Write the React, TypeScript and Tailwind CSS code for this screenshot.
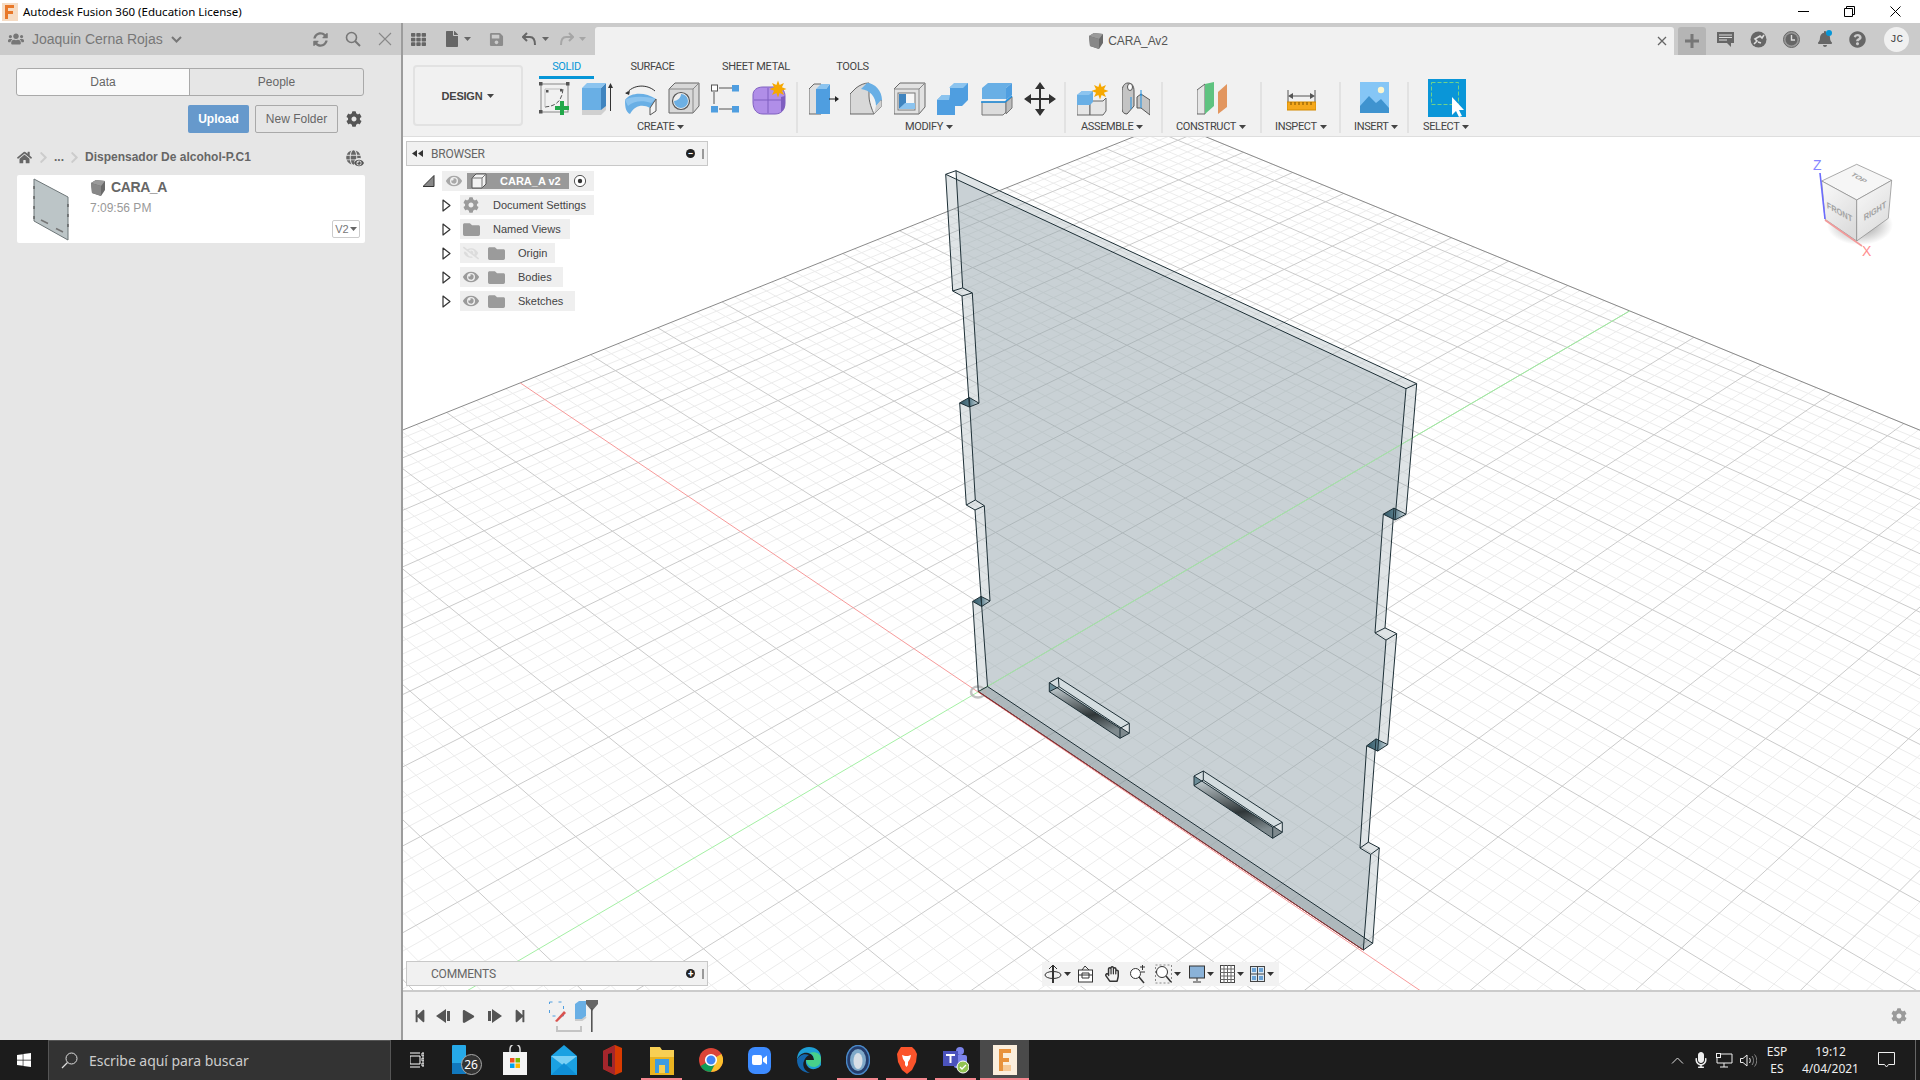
import {
  FaCog, FaHome, FaUsers, FaSyncAlt, FaGlobe, FaQuestionCircle, FaBell, FaFile, FaSave, FaEye, FaEyeSlash,
  FaFolder, FaMicrophone, FaPlay, FaTh, FaWindows, FaRegHandPaper, FaChevronRight, FaStepBackward, FaStepForward,
} from 'react-icons/fa';

// ground grid: homography fitted on the axes of the reference
const project = (u: number, v: number) => {
  const t = u * 0.02679;
  const s = v * 0.02814;
  const d = 1 + t + s;
  return [(978 - 1476 * t + 3661 * s) / d, (692 - 965 * t - 877 * s) / d];
};

const U_MAX = 8.56;
const V_MAX = 11.4;
const U_MIN = -14;
const V_MIN = -13;

function gridLines(major: boolean) {
  const lines: string[] = [];
  for (let i = -70; i <= 42; i++) {
    if ((i % 5 === 0) !== major || i === 0) continue;
    const a = project(i / 5, V_MIN);
    const b = project(i / 5, V_MAX);
    lines.push(`M${a[0]} ${a[1]}L${b[0]} ${b[1]}`);
  }
  for (let i = -65; i <= 57; i++) {
    if ((i % 5 === 0) !== major || i === 0) continue;
    const a = project(U_MIN, i / 5);
    const b = project(U_MAX, i / 5);
    lines.push(`M${a[0]} ${a[1]}L${b[0]} ${b[1]}`);
  }
  return lines.join('');
}

type Pt = [number, number];
const pts = (list: Pt[]) => list.map((p) => p.join(',')).join(' ');
const sub = (list: Pt[]) => 'M' + list.map((p) => p.join(' ')).join('L') + 'Z';

const FRONT: Pt[] = [
  [945.7, 174.3], [952.7, 291], [962, 296], [969.3, 407], [959.7, 402.9], [966.3, 505], [975, 510], [981.7, 606.5],
  [972.7, 601.4], [978.3, 691.5], [1363.3, 950], [1370.7, 854.4], [1360, 848], [1366.7, 745.8], [1377.7, 751.1],
  [1386, 640.1], [1375, 632.9], [1383.3, 514.2], [1395, 520], [1406, 388.7],
];
const BACK: Pt[] = [
  [956, 170.7], [962.7, 287.9], [972.3, 292.9], [979, 403.2], [969.3, 397.5], [975.3, 500], [984.3, 505.7], [990, 601],
  [981, 596.4], [987.5, 686.5], [1372.7, 943.3], [1379.3, 848], [1368.3, 842.2], [1376, 738.9], [1387.7, 744.6],
  [1396.7, 633.6], [1385, 627.9], [1394, 508.1], [1406, 514.2], [1416.7, 383.7],
];
const SLOTS: { f: Pt[]; b: Pt[] }[] = [
  {
    f: [[1049.3, 682.7], [1120, 728.3], [1120, 738.3], [1049.3, 691.7]],
    b: [[1058.3, 677.7], [1129.3, 723.3], [1129.3, 733.3], [1059, 686.7]],
  },
  {
    f: [[1194, 776], [1272.7, 827.3], [1272.7, 838.3], [1194, 785.7]],
    b: [[1203.3, 771], [1282.3, 822.3], [1282.3, 832.3], [1203.3, 780]],
  },
];
const DARK_STEPS = [3, 7, 17, 13];

function Scene() {
  const holes = SLOTS.map((s) => sub(s.f)).join('');
  const holesB = SLOTS.map((s) => sub(s.b)).join('');
  return (
    <svg className="absolute inset-0 w-full h-full" viewBox="403 137 1517 853">
      <defs>
        <linearGradient id="wall" x1="0" y1="0" x2="0.3" y2="1">
          <stop offset="0" stopColor="#c8d2d6" />
          <stop offset="0.65" stopColor="#2f3638" />
          <stop offset="1" stopColor="#7f8a8e" />
        </linearGradient>
        <linearGradient id="step" x1="0" y1="0" x2="1" y2="0">
          <stop offset="0" stopColor="#2f5563" />
          <stop offset="0.5" stopColor="#5b7f8d" />
          <stop offset="1" stopColor="#d0dade" />
        </linearGradient>
      </defs>
      <path d={gridLines(false)} stroke="#ececec" strokeWidth="1" fill="none" />
      <path d={gridLines(true)} stroke="#cbcbcb" strokeWidth="1" fill="none" />
      <path d={`M${project(U_MAX, V_MIN).join(' ')}L${project(U_MAX, V_MAX).join(' ')}L${project(U_MIN, V_MAX).join(' ')}`} stroke="#8a8a8a" strokeWidth="1" fill="none" />
      <path d={`M${project(U_MAX, 0).join(' ')}L${project(U_MIN, 0).join(' ')}`} stroke="#f79a9a" strokeWidth="1" fill="none" />
      <path d={`M${project(0, V_MAX).join(' ')}L${project(0, V_MIN).join(' ')}`} stroke="#a4f0a4" strokeWidth="1" fill="none" />

      {/* plate */}
      <path d={sub(BACK) + holesB} fill="#98a9ae" fillOpacity="0.31" fillRule="evenodd" />
      <path d={sub(FRONT) + holes} fill="#98a9ae" fillOpacity="0.31" fillRule="evenodd" />
      <polygon points={pts([FRONT[9], FRONT[10], BACK[10], BACK[9]])} fill="#6c7c84" fillOpacity="0.42" />
      {DARK_STEPS.map((i) => (
        <polygon key={i} points={pts([FRONT[i], FRONT[i + 1], BACK[i + 1], BACK[i]])} fill="url(#step)" />
      ))}
      {SLOTS.map((s, i) => (
        <g key={i}>
          <polygon points={pts([s.f[3], s.f[2], s.b[2], s.b[3]])} fill="url(#wall)" />
          <polygon points={pts([s.f[0], s.b[0], s.b[3], s.f[3]])} fill="#4d7583" fillOpacity="0.8" />
          <polygon points={pts([s.f[0], s.f[1], s.b[1], s.b[0]])} fill="#d4dde0" />
        </g>
      ))}
      <path d={`M${project(0, 11.4).join(' ')}L978 692`} stroke="#a6e2a6" strokeWidth="1" fill="none" />
      <ellipse cx="978" cy="692" rx="7" ry="5.5" fill="none" stroke="#b4b4b4" strokeWidth="2.5" opacity="0.8" />

      <g stroke="#1d2f36" strokeWidth="1" fill="none" strokeLinejoin="round">
        <polygon points={pts(FRONT)} />
        <polygon points={pts(BACK)} />
        {FRONT.map((p, i) => (
          <line key={i} x1={p[0]} y1={p[1]} x2={BACK[i][0]} y2={BACK[i][1]} />
        ))}
        {SLOTS.map((s, i) => (
          <g key={i}>
            <polygon points={pts(s.f)} />
            <polygon points={pts(s.b)} />
            {s.f.map((p, j) => (
              <line key={j} x1={p[0]} y1={p[1]} x2={s.b[j][0]} y2={s.b[j][1]} />
            ))}
          </g>
        ))}
      </g>
      <path d={`M978.3 691.5L1363.3 950`} stroke="#9c2b2b" strokeWidth="1" fill="none" />
    </svg>
  );
}

function ViewCube() {
  return (
    <svg className="absolute left-[1404px] top-[20px]" width="90" height="108" viewBox="1807 157 90 108">
      <defs>
        <linearGradient id="cubeF" x1="0" y1="0" x2="0.6" y2="1">
          <stop offset="0" stopColor="#fafafa" />
          <stop offset="1" stopColor="#dcdcdc" />
        </linearGradient>
        <radialGradient id="cubeS">
          <stop offset="0.4" stopColor="#888" stopOpacity="0.55" />
          <stop offset="1" stopColor="#888" stopOpacity="0" />
        </radialGradient>
      </defs>
      <ellipse cx="1860" cy="225" rx="33" ry="20" fill="url(#cubeS)" />
      <polygon points="1856.7,164.3 1891.7,180.3 1856.7,200 1821.7,181" fill="#f6f6f6" stroke="#888" strokeWidth="0.7" />
      <polygon points="1821.7,181 1856.7,200 1856.7,241 1825,219.3" fill="url(#cubeF)" stroke="#888" strokeWidth="0.7" />
      <polygon points="1856.7,200 1891.7,180.3 1888.3,218.3 1856.7,241" fill="url(#cubeF)" stroke="#888" strokeWidth="0.7" />
      <g fill="#a2a2a2" fontFamily="Liberation Sans" fontWeight="bold">
        <text transform="matrix(0.72 0.42 -0.62 0.38 1850 175)" fontSize="9.5">TOP</text>
        <text transform="matrix(0.82 0.46 0.06 1 1827 208)" fontSize="9">FRONT</text>
        <text transform="matrix(0.8 -0.5 0.06 1 1864 221)" fontSize="9">RIGHT</text>
      </g>
      <line x1="1820" y1="173" x2="1825" y2="219" stroke="#6b6bff" strokeWidth="1.6" />
      <line x1="1825" y1="220" x2="1862" y2="246" stroke="#f39a9a" strokeWidth="1.6" />
      <text x="1813" y="170" fontSize="14" fill="#8686ff" fontFamily="Liberation Sans">Z</text>
      <text x="1862" y="256" fontSize="14" fill="#ff9090" fontFamily="Liberation Sans">X</text>
    </svg>
  );
}

function Caret({ className = 'text-[#444]' }: { className?: string }) {
  return (
    <svg className={className} width="7" height="4" viewBox="0 0 7 4">
      <path d="M0 0h7L3.5 4z" fill="currentColor" />
    </svg>
  );
}

/* toolbar drawings */
const IconSketch = () => (
  <svg width="32" height="34" viewBox="0 0 32 34">
    <rect x="2" y="2" width="27" height="28" fill="none" stroke="#888" strokeWidth="1" />
    <path d="M6 25C18 24 23 18 24 7" fill="none" stroke="#555" strokeWidth="1" strokeDasharray="4 2" />
    <path d="M6 7h17M6 7v18" stroke="#bbb" strokeWidth="1" />
    <g fill="#555">
      <rect x="0" y="0" width="3.5" height="3.5" />
      <rect x="27" y="0" width="3.5" height="3.5" />
      <rect x="0" y="28" width="3.5" height="3.5" />
      <rect x="7" y="8" width="2.5" height="2.5" />
      <rect x="21" y="7" width="2.5" height="2.5" />
    </g>
    <path d="M21 19h4v5h5v4h-5v5h-4v-5h-5v-4h5z" fill="#22a84a" />
  </svg>
);
const IconExtrude = () => (
  <svg width="32" height="34" viewBox="0 0 32 34">
    <path d="M0 28l5-4h19v4l-5 5H0z" fill="#d0d0d0" />
    <path d="M0 6h19v22H0z" fill="#69afe5" />
    <path d="M19 6l5-5v23l-5 4z" fill="#3f84bf" />
    <path d="M0 6l5-5h19l-5 5z" fill="#8cc4ef" />
    <path d="M28.5 29V3" stroke="#333" strokeWidth="1" />
    <path d="M26 6l2.5-5L31 6z" fill="#333" />
  </svg>
);
const IconRevolve = () => (
  <svg width="32" height="34" viewBox="0 0 32 34">
    <path d="M1 12C8 2 22 2 30 9" fill="none" stroke="#333" strokeWidth="1" />
    <path d="M0 11l5-2-1 4z" fill="#333" />
    <path d="M0 18C6 10 20 10 31 17l-6 9C18 22 10 23 5 32 1 30 0 26 0 18z" fill="#69afe5" />
    <path d="M0 18C6 14 20 14 31 17L26 21C18 18 8 19 3 24z" fill="#8cc4ef" />
    <path d="M25 26l6-9v12l-6 4z" fill="#f4f4f4" stroke="#555" strokeWidth="1" />
  </svg>
);
const IconHole = () => (
  <svg width="32" height="34" viewBox="0 0 32 34">
    <path d="M1 7l6-6h24v23l-6 7H1z" fill="#d8d8d8" stroke="#666" strokeWidth="1" />
    <path d="M1 7h24v24M25 7l6-6" fill="none" stroke="#888" strokeWidth="1" />
    <circle cx="13" cy="19" r="8.5" fill="#eee" stroke="#555" strokeWidth="1.2" />
    <path d="M13 12a7 7 0 1 1-7 7c3 0 7-3 7-7z" fill="#6db0e4" />
  </svg>
);
const IconPattern = () => (
  <svg width="28" height="34" viewBox="0 0 28 34">
    <path d="M8 6h13M3 10v12M8 27h13" stroke="#555" strokeWidth="1" />
    <rect x="0.5" y="3" width="6" height="6" fill="#fff" stroke="#555" />
    <rect x="21" y="3" width="7" height="6.5" fill="#4f9ee0" />
    <rect x="0" y="24" width="7" height="6.5" fill="#4f9ee0" />
    <rect x="21" y="24" width="7" height="6.5" fill="#4f9ee0" />
  </svg>
);
const Star = ({ x, y, r }: { x: number; y: number; r: number }) => {
  const p: string[] = [];
  for (let i = 0; i < 16; i++) {
    const a = (i * Math.PI) / 8;
    const l = i % 2 ? r * 0.5 : r;
    p.push(`${x + l * Math.cos(a)},${y + l * Math.sin(a)}`);
  }
  return <polygon points={p.join(' ')} fill="#f6a800" />;
};
const IconForm = () => (
  <svg className="ml-[3px] overflow-visible" width="33" height="34" viewBox="0 0 33 34">
    <path d="M0 13C0 8 4 5 10 5h12c7 0 10 4 10 9v7c0 7-4 11-10 11H10C4 32 0 28 0 20z" fill="#b08ee8" stroke="#7f5fc0" />
    <path d="M1 18h30M15 6v25" stroke="#7f5fc0" strokeWidth="1" />
    <path d="M28 15l4-1v7c0 4-1 7-4 9z" fill="#7f5fc0" />
    <Star x={25} y={7} r={8.5} />
  </svg>
);
const IconPressPull = () => (
  <svg width="30" height="34" viewBox="0 0 30 34">
    <path d="M0 7l5-5h7v30H0z" fill="#e0e0e0" stroke="#666" />
    <path d="M7 7h10l4-5v30H7z" fill="#4f9ee0" />
    <path d="M7 7l5-5h9l-4 5z" fill="#8cc4ef" />
    <path d="M20 17h7" stroke="#222" />
    <path d="M26 14l4 3-4 3z" fill="#222" />
  </svg>
);
const IconFillet = () => (
  <svg width="32" height="34" viewBox="0 0 32 34">
    <path d="M0 12l6-6c4-3 8-5 13-5v13C19 22 24 32 24 32H0z" fill="#d8d8d8" stroke="#666" />
    <path d="M11 7L17 1c8 0 15 8 15 17l-6 6C26 15 20 8 11 7z" fill="#69afe5" />
    <path d="M24 32l7-7V18" fill="none" stroke="#666" />
    <path d="M24 32l2-8 5-6v7z" fill="#d0d0d0" />
  </svg>
);
const IconShell = () => (
  <svg width="32" height="34" viewBox="0 0 32 34">
    <path d="M0 7l6-6h25v24l-6 7H0z" fill="#e2e2e2" stroke="#666" />
    <path d="M0 7h25v25M25 7l6-6" fill="none" stroke="#888" />
    <rect x="4" y="11" width="17" height="17" fill="#f6f6f6" stroke="#777" />
    <path d="M5 12h7v9l-7 6z" fill="#3f84bf" />
    <path d="M5 27l6-6h10v6z" fill="#8cc4ef" />
  </svg>
);
const IconCombine = () => (
  <svg width="32" height="34" viewBox="0 0 32 34">
    <path d="M0 18l5-5h8v-8l5-4h13v17l-6 6h-7v9H0z" fill="#4f9ee0" />
    <path d="M12 6l5-5h14l-5 5zM0 18l5-5h8l-1 5z" fill="#8cc4ef" />
  </svg>
);
const IconSplit = () => (
  <svg width="32" height="34" viewBox="0 0 32 34">
    <path d="M1 20h24v10l-3 3H1z" fill="#dcdcdc" stroke="#777" />
    <path d="M25 20l6-5v11l-6 6z" fill="#bdbdbd" stroke="#777" />
    <path d="M1 6l6-5h24l-6 5zM1 6h24v11H1z" fill="#69afe5" />
    <path d="M25 6l6-5v12l-6 5z" fill="#4f9ee0" />
    <path d="M0 20h24l7-6" fill="none" stroke="#1e8fe0" strokeWidth="1.5" />
  </svg>
);
const IconMove = () => (
  <svg width="32" height="34" viewBox="0 0 32 34">
    <path d="M16 4v26M3 17h26" stroke="#333" strokeWidth="2" />
    <path d="M16 0l5 7H11zM16 34l-5-7h10zM0 17l7-5v10zM32 17l-7 5V12z" fill="#333" />
  </svg>
);
const IconNewComp = () => (
  <svg width="32" height="34" viewBox="0 0 32 34">
    <path d="M0 14h13v19H0z" fill="#e6e6e6" stroke="#666" />
    <path d="M13 19h13l3-3v13l-3 4H13z" fill="#e6e6e6" stroke="#666" />
    <path d="M0 13l5-4h11v11l-3 3H0z" fill="#69afe5" />
    <path d="M0 13l5-4h11l-4 4z" fill="#8cc4ef" />
    <Star x={23} y={9} r={8.5} />
  </svg>
);
const IconJoint = () => (
  <svg width="28" height="34" viewBox="0 0 28 34">
    <path d="M0 10C0 5 2 1 6 1s6 3 6 8v15l-7 8c-3 0-5-2-5-5z" fill="#c4c4c4" stroke="#555" />
    <ellipse cx="8" cy="5" rx="2.5" ry="3.5" fill="#fff" stroke="#555" />
    <path d="M15 15l4-3 9 6v15l-9-7h-4z" fill="#c4c4c4" stroke="#555" />
    <path d="M19 12v14M9 15v12M19 8v6" stroke="#1e8fe0" />
  </svg>
);
const IconConstruct = () => (
  <svg width="30" height="34" viewBox="0 0 30 34">
    <path d="M0 8l8-6v30H0z" fill="#e6e6e6" stroke="#666" />
    <path d="M8 2l9-2v24l-9 8z" fill="#5fc380" />
    <path d="M21 10l9-8v23l-9 7z" fill="#e2965f" />
  </svg>
);
const IconInspect = () => (
  <svg width="29" height="34" viewBox="0 0 29 34">
    <path d="M1 8v12M28 8v12M3 14h23" stroke="#555" />
    <path d="M1 14l5-3v6zM28 14l-5-3v6z" fill="#555" />
    <rect x="0" y="20" width="29" height="8" fill="#f5a81c" stroke="#d38a00" />
    <path d="M4 20v3M8 20v3M12 20v3M16 20v3M20 20v3M24 20v3" stroke="#7a5000" />
  </svg>
);
const IconInsert = () => (
  <svg width="29" height="32" viewBox="0 0 29 32">
    <rect width="29" height="31" fill="#85c6f6" />
    <path d="M0 24l9-10 7 7 5-4 8 9v5H0z" fill="#3f93cf" />
    <circle cx="21" cy="8" r="3.2" fill="#fbf6cf" />
  </svg>
);
const IconSelect = () => (
  <svg width="38" height="38" viewBox="0 0 38 38">
    <rect width="38" height="38" fill="#0a96d8" />
    <rect x="3.5" y="3.5" width="27" height="22" fill="none" stroke="#6fd28a" strokeWidth="1" strokeDasharray="4 2" />
    <path d="M24 18v18l4-4 3 6 3-1-3-6h5z" fill="#fff" />
  </svg>
);

function Group({ w, pl, gap, ml, label, children, last }: { w: string; pl: string; gap: string; ml: string; label: string; children: React.ReactNode; last?: boolean }) {
  return (
    <div className={`${w} h-[51px] flex flex-col shrink-0 ${last ? '' : 'border-r-2 border-[#e2e2e2]'}`}>
      <div className={`${pl} ${gap} h-[38px] shrink-0 flex items-start`}>{children}</div>
      <div className={`${ml} shrink-0 flex items-center gap-[3px] text-[11px] tracking-[-0.35px] text-[#444] font-['Roboto',sans-serif]`}>
        {label}
        <Caret />
      </div>
    </div>
  );
}

function BrowserTree() {
  const tri = (
    <svg width="10" height="13" viewBox="0 0 10 13">
      <path d="M1 1l7 5.5L1 12z" fill="#fff" stroke="#333" strokeWidth="1.2" strokeLinejoin="round" />
    </svg>
  );
  const folder = <FaFolder className="text-[#9b9b9b] text-[17px]" />;
  const eye = <FaEye className="text-[#9b9b9b] text-[16px]" />;
  const rowCls = 'h-5 bg-[#efefef] flex items-center text-[11px] text-[#444] whitespace-nowrap';
  return (
    <div className="absolute left-[20px] top-[34px] flex flex-col gap-[4px]">
      <div className="flex items-center">
        <svg className="w-[19px]" width="19" height="12" viewBox="0 0 19 12">
          <path d="M0 11.5L11 0.5v11z" fill="#888" stroke="#333" />
        </svg>
        <div className="w-[152px] h-5 bg-[#efefef] flex items-center pl-[3px]">
          <FaEye className="text-[#a8a8a8] text-[16px] ml-[1px]" />
          <div className="ml-[5px] w-[102px] h-4 bg-[#999] flex items-center">
            <svg className="ml-[4px]" width="16" height="16" viewBox="0 0 16 16">
              <path d="M1 5l4-4h10v10l-4 4H1z" fill="#f2f2f2" stroke="#555" />
              <path d="M1 5h10v10M11 5l4-4" fill="none" stroke="#777" />
            </svg>
            <span className="ml-[13px] text-white font-bold text-[11px] whitespace-nowrap">CARA_A v2</span>
          </div>
          <svg className="ml-[4px]" width="14" height="14" viewBox="0 0 14 14">
            <circle cx="7" cy="7" r="5.6" fill="#fff" stroke="#555" />
            <circle cx="7" cy="7" r="2.2" fill="#333" />
          </svg>
        </div>
      </div>
      <div className="flex items-center pl-[19px]">
        <div className="w-[18px]">{tri}</div>
        <div className={`${rowCls} w-[134px] pl-[3px]`}>
          <FaCog className="text-[#9b9b9b] text-[16px]" />
          <span className="ml-[14px]">Document Settings</span>
        </div>
      </div>
      <div className="flex items-center pl-[19px]">
        <div className="w-[18px]">{tri}</div>
        <div className={`${rowCls} w-[110px] pl-[3px]`}>
          {folder}
          <span className="ml-[13px]">Named Views</span>
        </div>
      </div>
      <div className="flex items-center pl-[19px]">
        <div className="w-[18px]">{tri}</div>
        <div className={`${rowCls} w-[95px] pl-[3px]`}>
          <FaEyeSlash className="text-[#dcdcdc] text-[16px]" />
          <span className="ml-[9px]">{folder}</span>
          <span className="ml-[13px]">Origin</span>
        </div>
      </div>
      <div className="flex items-center pl-[19px]">
        <div className="w-[18px]">{tri}</div>
        <div className={`${rowCls} w-[103px] pl-[3px]`}>
          {eye}
          <span className="ml-[9px]">{folder}</span>
          <span className="ml-[13px]">Bodies</span>
        </div>
      </div>
      <div className="flex items-center pl-[19px]">
        <div className="w-[18px]">{tri}</div>
        <div className={`${rowCls} w-[115px] pl-[3px]`}>
          {eye}
          <span className="ml-[9px]">{folder}</span>
          <span className="ml-[13px]">Sketches</span>
        </div>
      </div>
    </div>
  );
}

function PanelHead({ label, sign, cls }: { label: string; sign: string; cls: string }) {
  return (
    <div className={`absolute left-[3px] w-[302px] h-[25px] bg-[#f1f1f1] border border-[#c8c8c8] flex items-center text-[12px] tracking-[-0.2px] text-[#666] font-['Roboto',sans-serif] ${cls}`}>
      <span className="w-[24px] pl-[5px] text-[#333]">
        {sign === '−' && (
          <svg width="11" height="7" viewBox="0 0 11 7">
            <path d="M5 0v7L0 3.5zM11 0v7L6 3.5z" fill="#333" />
          </svg>
        )}
      </span>
      <span>{label}</span>
      <span className="ml-auto mr-[7px] w-[9px] h-[9px] rounded-full bg-[#222] text-white flex items-center justify-center text-[10px] leading-none font-bold">
        {sign === '−' ? '−' : '+'}
      </span>
      <span className="mr-[3px] w-[2px] h-[10px] border-x border-[#999]" />
    </div>
  );
}

function NavBar() {
  const caret = <Caret className="text-[#333] ml-[2px]" />;
  return (
    <div className="absolute left-[639px] top-[825px] w-[237px] h-[24px] bg-[#f2f2f2] flex items-center pl-[2px] text-[#333]">
      <svg width="18" height="20" viewBox="0 0 18 20">
        <ellipse cx="9" cy="11" rx="8" ry="3.5" fill="none" stroke="#333" />
        <path d="M9 1v18" stroke="#333" strokeWidth="2" />
        <path d="M5 5l4-4 4 4" fill="none" stroke="#333" />
      </svg>
      {caret}
      <svg className="ml-[6px]" width="17" height="20" viewBox="0 0 17 20">
        <rect x="1.5" y="6" width="14" height="12" fill="#fff" stroke="#333" />
        <path d="M1.5 11h14M5 9h7v5H5z" fill="none" stroke="#333" />
        <path d="M5 6l3-4 4 4" fill="none" stroke="#333" />
      </svg>
      <FaRegHandPaper className="ml-[10px] text-[16px]" />
      <svg className="ml-[9px]" width="17" height="20" viewBox="0 0 17 20">
        <circle cx="6.5" cy="9.5" r="5" fill="#fff" stroke="#333" />
        <path d="M10 13l5 6" stroke="#333" strokeWidth="1.5" />
        <path d="M11 3h5M13.5 1v5M12 8h4" stroke="#333" />
      </svg>
      <svg className="ml-[9px]" width="17" height="20" viewBox="0 0 17 20">
        <rect x="0.5" y="1" width="16" height="18" fill="none" stroke="#888" strokeDasharray="2 2" />
        <circle cx="7" cy="8" r="5.5" fill="#fff" stroke="#333" />
        <path d="M11 12l5 6" stroke="#333" strokeWidth="1.5" />
      </svg>
      {caret}
      <svg className="ml-[8px]" width="16" height="20" viewBox="0 0 16 20">
        <rect x="0.5" y="2" width="15" height="12" fill="#8ab2d8" stroke="#333" />
        <path d="M8 14v3M4 18h8" stroke="#333" />
      </svg>
      {caret}
      <svg className="ml-[6px]" width="15" height="18" viewBox="0 0 15 18">
        <rect x="0.5" y="0.5" width="14" height="17" fill="#fff" stroke="#444" />
        <path d="M0 4h15M0 7.5h15M0 11h15M0 14.5h15M4 0v18M7.5 0v18M11 0v18" stroke="#666" />
      </svg>
      {caret}
      <svg className="ml-[6px]" width="15" height="16" viewBox="0 0 15 16">
        <rect x="0.5" y="0.5" width="14" height="15" fill="#dbe7f2" stroke="#444" />
        <path d="M7.500 0v16M0 8h15" stroke="#444" />
        <rect x="2" y="2" width="4" height="4" fill="#6ba3d6" />
        <rect x="9" y="2" width="4" height="4" fill="#6ba3d6" />
        <rect x="2" y="10" width="4" height="4" fill="#6ba3d6" />
        <rect x="9" y="10" width="4" height="4" fill="#6ba3d6" />
      </svg>
      {caret}
    </div>
  );
}

function Timeline() {
  const c = 'text-[#555]';
  return (
    <div className="h-[48px] bg-[#f1f1f1] flex items-center pl-[10px] relative shrink-0">
      <FaStepBackward className={`${c} text-[14px]`} />
      <svg className="ml-[9px]" width="15" height="14" viewBox="0 0 15 14">
        <path d="M10 0v14L0 7zM11 2h3v10h-3z" fill="#555" />
      </svg>
      <FaPlay className={`${c} text-[13px] ml-[11px]`} />
      <svg className="ml-[12px]" width="15" height="14" viewBox="0 0 15 14">
        <path d="M5 0v14l10-7zM1 2h3v10H1z" fill="#555" />
      </svg>
      <FaStepForward className={`${c} text-[14px] ml-[11px]`} />
      <svg className="ml-[21px] mt-[2px]" width="50" height="40" viewBox="0 0 50 40">
        <rect x="1.5" y="5" width="14" height="14" fill="none" stroke="#4f9ee0" strokeDasharray="3 6" />
        <path d="M7 24L16 14l2 2-9 9z" fill="#d9534f" />
        <path d="M27 7l4-3h7v15l-4 4h-7z" fill="#69afe5" />
        <path d="M27 23h7l4-3" stroke="#ccc" strokeWidth="2" fill="none" />
        <path d="M9 29v5h24v-5" fill="none" stroke="#c4c4c4" strokeWidth="2" />
      </svg>
      <svg className="absolute left-[182px] top-[8px]" width="14" height="34" viewBox="0 0 14 34">
        <path d="M1 0h12v4l-6 7-6-7z" fill="#666" />
        <path d="M6 8h1.600v24H6z" fill="#555" />
      </svg>
      <FaCog className="ml-auto mr-[13px] text-[#9a9a9a] text-[16px]" />
    </div>
  );
}

function ThumbPlate() {
  return (
    <svg width="36" height="63" viewBox="0 0 36 63">
      <polygon points="1,1 35,19 35,62 1,43" fill="#bcc5c7" stroke="#6d7678" strokeWidth="1" />
      <path d="M1 8v3M1 18v3M1 28v3M1 38v3M35 26v3M35 36v3M35 46v3" stroke="#555" strokeWidth="1.2" />
      <path d="M8 42l7 3.500M23 50.500l7 3.500" stroke="#777" strokeWidth="1.6" />
    </svg>
  );
}

function CubeIcon({ size, cls }: { size: number; cls?: string }) {
  return (
    <svg className={cls} width={size} height={size} viewBox="0 0 16 16">
      <path d="M1 3l5-3 9 1v9l-4 6-9-3z" fill="#6a6a6a" />
      <path d="M1 3l10 3 4-5-9-1z" fill="#9a9a9a" />
      <path d="M1 3l10 3v10l-9-3z" fill="#888" />
    </svg>
  );
}

function LeftPanel() {
  return (
    <div className="w-[403px] shrink-0 bg-[#e6e6e6] border-r-2 border-[#9c9c9c] flex flex-col">
      <div className="h-[32px] bg-[#cbcbcb] flex items-center pl-[8px] text-[#777]">
        <FaUsers className="text-[16px]" />
        <span className="ml-[8px] text-[14px]">Joaquin Cerna Rojas</span>
        <svg className="ml-[8px]" width="11" height="7" viewBox="0 0 11 7">
          <path d="M1 1l4.500 4.500L10 1" fill="none" stroke="#777" strokeWidth="2" />
        </svg>
        <FaSyncAlt className="ml-auto text-[15px]" />
        <svg className="ml-[17px]" width="16" height="16" viewBox="0 0 16 16">
          <circle cx="6.5" cy="6.5" r="5" fill="none" stroke="#777" strokeWidth="1.6" />
          <path d="M10 10l5 5" stroke="#777" strokeWidth="2" />
        </svg>
        <svg className="ml-[17px] mr-[9px]" width="14" height="14" viewBox="0 0 14 14">
          <path d="M1 1l12 12M13 1L1 13" stroke="#888" strokeWidth="1.1" />
        </svg>
      </div>
      <div className="mt-[13px] mx-[16px] w-[348px] h-[28px] flex border border-[#a9a9a9] rounded-[3px] text-[12px] text-[#666]">
        <div className="w-[173px] bg-[#fafafa] border-r border-[#a9a9a9] flex items-center justify-center rounded-l-[3px]">Data</div>
        <div className="flex-1 flex items-center justify-center">People</div>
      </div>
      <div className="mt-[9px] pl-[188px] flex items-center">
        <div className="w-[61px] h-[28px] rounded-[2px] bg-[#6699cc] text-white font-bold text-[12px] flex items-center justify-center">Upload</div>
        <div className="ml-[6px] w-[83px] h-[28px] rounded-[2px] border border-[#a9a9a9] text-[#666] text-[12px] flex items-center justify-center">New Folder</div>
        <FaCog className="ml-[8px] text-[#555] text-[16px]" />
      </div>
      <div className="mt-[15px] pl-[17px] h-[18px] flex items-center text-[#666] font-bold text-[12px]">
        <FaHome className="text-[15px]" />
        <FaChevronRight className="ml-[5px] text-[#ccc] text-[13px]" />
        <span className="ml-[4px]">...</span>
        <FaChevronRight className="ml-[4px] text-[#ccc] text-[13px]" />
        <span className="ml-[4px]">Dispensador De alcohol-P.C1</span>
        <span className="relative ml-auto mr-[40px]">
          <FaGlobe className="text-[#666] text-[15px]" />
          <FaEye className="absolute right-[-3px] bottom-[-3px] text-[#555] text-[10px] bg-[#e6e6e6] rounded-full" />
        </span>
      </div>
      <div className="relative mt-[9px] ml-[17px] w-[348px] h-[68px] bg-white rounded-[2px] flex">
        <div className="ml-[16px] mt-[3px]">
          <ThumbPlate />
        </div>
        <div className="ml-[21px] mt-[2px]">
          <div className="flex items-center">
            <CubeIcon size={16} />
            <span className="ml-[5px] text-[14px] text-[#666] font-bold tracking-[-0.4px]">CARA_A</span>
          </div>
          <div className="mt-[1px] text-[12px] text-[#999]">7:09:56 PM</div>
        </div>
        <div className="absolute right-[5px] bottom-[5px] w-[28px] h-[18px] border border-[#ccc] rounded-[2px] flex items-center justify-center gap-[1px] text-[11px] text-[#777]">
          V2
          <Caret className="text-[#666]" />
        </div>
      </div>
    </div>
  );
}

function TopBar() {
  return (
    <div className="h-[32px] bg-[#cbcbcb] flex items-end shrink-0">
      <div className="w-[192px] h-[32px] flex items-center pl-[8px] text-[#666]">
        <FaTh className="text-[15px]" />
        <FaFile className="ml-[18px] text-[16px]" />
        <Caret className="text-[#666] ml-[4px]" />
        <FaSave className="ml-[18px] text-[#8c8c8c] text-[15px]" />
        <svg className="ml-[18px]" width="15" height="14" viewBox="0 0 15 14">
          <path d="M5 1L1 5l4 4M1 5h7c3.500 0 5 3 5 8" fill="none" stroke="#666" strokeWidth="2" />
        </svg>
        <Caret className="text-[#666] ml-[5px]" />
        <svg className="ml-[10px]" width="15" height="14" viewBox="0 0 15 14">
          <path d="M10 1l4 4-4 4M14 5H7C3.500 5 2 8 2 13" fill="none" stroke="#a6a6a6" strokeWidth="2" />
        </svg>
        <Caret className="text-[#a6a6a6] ml-[5px]" />
      </div>
      <div className="w-[1079px] h-[28px] bg-[#f1f1f1] rounded-t-[3px] flex items-center text-[12px] text-[#555]">
        <div className="flex-1 flex items-center justify-center pl-[4px]">
          <CubeIcon size={16} />
          <span className="ml-[4px] tracking-[-0.1px]">CARA_Av2</span>
        </div>
        <svg className="mr-[7px]" width="10" height="10" viewBox="0 0 10 10">
          <path d="M1 1l8 8M9 1L1 9" stroke="#666" strokeWidth="1.3" />
        </svg>
      </div>
      <div className="ml-[4px] w-[28px] h-[28px] bg-[#b5b5b5] rounded-t-[3px] flex items-center justify-center">
        <svg width="14" height="14" viewBox="0 0 14 14">
          <path d="M7 0v14M0 7h14" stroke="#777" strokeWidth="3" />
        </svg>
      </div>
      <div className="h-[32px] flex items-center text-[#666] ml-[3px]">
        <div className="w-[33px] flex justify-center">
          <svg width="17" height="15" viewBox="0 0 17 15">
            <path d="M0 0h17v11h-3v4l-4-4H0z" fill="#666" />
            <path d="M2 3h13M2 5.500h13M2 8h8" stroke="#ddd" />
          </svg>
        </div>
        <div className="w-[33px] flex justify-center">
          <svg width="17" height="17" viewBox="0 0 17 17">
            <circle cx="8.5" cy="8.5" r="8" fill="#666" />
            <path d="M4 13l3-3-2-2 5-3 2 2 2-3M8 11l3 1" fill="none" stroke="#ddd" strokeWidth="1.6" />
          </svg>
        </div>
        <div className="w-[33px] flex justify-center">
          <svg width="17" height="17" viewBox="0 0 17 17">
            <circle cx="8.5" cy="8.5" r="8" fill="#999" stroke="#666" />
            <circle cx="8.5" cy="8.5" r="6" fill="#666" />
            <path d="M8.500 4v5h3.500" fill="none" stroke="#ddd" strokeWidth="1.4" />
          </svg>
        </div>
        <div className="w-[33px] flex justify-center relative">
          <FaBell className="text-[16px]" />
          <span className="absolute top-[-1px] left-[18px] w-[6px] h-[6px] rounded-full bg-[#0696d7]" />
        </div>
        <div className="w-[33px] flex justify-center">
          <FaQuestionCircle className="text-[17px]" />
        </div>
        <div className="ml-[10px] w-[25px] h-[25px] rounded-full bg-[#f0f0f0] flex items-center justify-center text-[11px] text-[#444] font-['Liberation_Mono',monospace]">JC</div>
      </div>
    </div>
  );
}

function Toolbar() {
  return (
    <div className="h-[82px] bg-[#f1f1f1] border-b border-[#dedede] flex shrink-0">
      <div className="ml-[10px] mt-[10px] w-[110px] h-[61px] border-2 border-[#e2e2e2] rounded-[4px] flex items-center justify-center gap-[5px] pt-[1px] text-[11px] font-bold tracking-[-0.2px] text-[#444]">
        DESIGN
        <Caret />
      </div>
      <div className="ml-[16px] flex flex-col">
        <div className="h-[27px] shrink-0 flex items-start text-[11px] tracking-[-0.3px] text-[#444] font-['Roboto',sans-serif]">
          <div className="w-[55px] h-[24px] border-b-[3px] border-[#0696d7] text-[#0696d7] flex items-center justify-center pt-[3px]">SOLID</div>
          <div className="w-[117px] h-[24px] flex items-center justify-center">SURFACE</div>
          <div className="w-[90px] h-[24px] flex items-center justify-center">SHEET METAL</div>
          <div className="w-[103px] h-[24px] flex items-center justify-center">TOOLS</div>
        </div>
        <div className="flex">
          <Group w="w-[259px]" pl="pl-0" gap="gap-[11px]" ml="ml-[98px] -mt-px" label="CREATE">
            <IconSketch />
            <IconExtrude />
            <IconRevolve />
            <IconHole />
            <IconPattern />
            <IconForm />
          </Group>
          <Group w="w-[268px]" pl="pl-[11px]" gap="gap-[11.4px]" ml="ml-[107px] -mt-px" label="MODIFY">
            <IconPressPull />
            <IconFillet />
            <IconShell />
            <IconCombine />
            <IconSplit />
            <IconMove />
          </Group>
          <Group w="w-[97px]" pl="pl-[11px]" gap="gap-[13px]" ml="ml-[15px] -mt-px" label="ASSEMBLE">
            <IconNewComp />
            <IconJoint />
          </Group>
          <Group w="w-[99px]" pl="pl-[34px]" gap="gap-0" ml="ml-[13px] -mt-px" label="CONSTRUCT">
            <IconConstruct />
          </Group>
          <Group w="w-[79px]" pl="pl-[25px]" gap="gap-0" ml="ml-[13px] -mt-px" label="INSPECT">
            <IconInspect />
          </Group>
          <Group w="w-[68px]" pl="pl-[19px]" gap="gap-0" ml="ml-[13px] -mt-px" label="INSERT">
            <IconInsert />
          </Group>
          <Group w="w-[80px]" pl="pl-[19px] -mt-[3px]" gap="gap-0" ml="ml-[14px] mt-[2px]" label="SELECT" last>
            <IconSelect />
          </Group>
        </div>
      </div>
    </div>
  );
}

/* taskbar drawings */
const TaskSlot = ({ children, pink, active }: { children?: React.ReactNode; pink?: boolean; active?: boolean }) => (
  <div className={`relative w-[49px] h-full flex items-center justify-center ${active ? 'bg-[#4a4a4a]' : ''}`}>
    {children}
    {pink && <span className={`absolute bottom-0 h-[2px] bg-[#f4868f] ${active ? 'left-0 right-0' : 'left-[4px] right-[4px]'}`} />}
  </div>
);

function Taskbar() {
  return (
    <div className="h-[40px] bg-[#1c1c1c] flex items-center shrink-0 text-[#eee] font-['Noto_Sans',sans-serif]">
      <div className="w-[48px] flex justify-center">
        <FaWindows className="text-[16px] text-white" />
      </div>
      <div className="w-[343px] h-full bg-[#333333] border-x border-t border-[#555] flex items-center pl-[12px] text-[14px] text-[#ccc]">
        <svg width="17" height="17" viewBox="0 0 17 17">
          <circle cx="10.5" cy="6.5" r="5.5" fill="none" stroke="#ddd" />
          <path d="M6.500 10.500L1 16" stroke="#ddd" strokeWidth="1.2" />
        </svg>
        <span className="ml-[11px] tracking-[-0.05px]">Escribe aquí para buscar</span>
      </div>
      <div className="h-full flex items-center ml-[1px]">
        <TaskSlot>
          <svg width="14" height="16" viewBox="0 0 14 16">
            <path d="M0 1h10M0 15h10M0 4h10v8H0zM12 1h2v3h-2zM12 6h2v3h-2zM12 11h2v3h-2z" fill="none" stroke="#fff" />
          </svg>
        </TaskSlot>
        <TaskSlot>
          <div className="relative w-[32px] h-[30px]">
            <svg className="absolute left-[2px] top-0" width="16" height="29" viewBox="0 0 16 29">
              <rect x="0" y="0" width="14" height="29" rx="1" fill="#26a9e8" />
              <rect x="0" y="18" width="14" height="11" fill="#1178bd" />
            </svg>
            <span className="absolute left-[11px] top-[9px] w-[21px] h-[21px] rounded-full bg-[#333] border border-[#aaa] text-[12px] leading-[19px] text-center text-white">26</span>
          </div>
        </TaskSlot>
        <TaskSlot>
          <svg width="24" height="30" viewBox="0 0 24 30">
            <path d="M7 8V4a5 5 0 0 1 10 0v4" fill="none" stroke="#ddd" strokeWidth="1.5" />
            <rect y="7" width="24" height="23" fill="#f3f3f3" />
            <rect x="7" y="13" width="4.5" height="4.5" fill="#f25022" />
            <rect x="12.5" y="13" width="4.5" height="4.5" fill="#7fba00" />
            <rect x="7" y="18.5" width="4.5" height="4.5" fill="#00a4ef" />
            <rect x="12.5" y="18.5" width="4.5" height="4.5" fill="#ffb900" />
          </svg>
        </TaskSlot>
        <TaskSlot>
          <svg width="26" height="30" viewBox="0 0 26 30">
            <path d="M0 11L13 0l13 11v19H0z" fill="#1ba1e2" />
            <path d="M0 11h26L13 21z" fill="#7ad0f5" />
            <path d="M0 30l13-12 13 12z" fill="#0f8fd6" />
          </svg>
        </TaskSlot>
        <TaskSlot>
          <svg width="19" height="30" viewBox="0 0 19 30">
            <path d="M0 6L12 0l7 3v24l-7 3L0 24z" fill="#d83b01" />
            <path d="M0 6l12-6v30L0 24z" fill="#a4262c" />
            <path d="M5 9l4-1v14l-4-1z" fill="#1c1c1c" />
          </svg>
        </TaskSlot>
        <TaskSlot pink>
          <svg width="24" height="30" viewBox="0 0 24 30">
            <path d="M0 2h10l2 3h12v25H0z" fill="#f8cf53" />
            <path d="M0 12h24v18H0z" fill="#eab320" />
            <rect x="5" y="14" width="14" height="14" fill="#3f9ce0" />
            <rect x="9" y="20" width="6" height="8" fill="#f8cf53" />
          </svg>
        </TaskSlot>
        <TaskSlot>
          <svg width="24" height="24" viewBox="0 0 24 24">
            <circle cx="12" cy="12" r="12" fill="#db4437" />
            <path d="M12 12L1.600 18A12 12 0 0 0 12 24l6-12z" fill="#0f9d58" />
            <path d="M12 12L22.400 6A12 12 0 0 1 12 24l6-12z" fill="#fbc02d" />
            <circle cx="12" cy="12" r="5.3" fill="#4285f4" stroke="#fff" strokeWidth="1.6" />
          </svg>
        </TaskSlot>
        <TaskSlot>
          <div className="w-[23px] h-[27px] rounded-[7px] bg-[#3d8bff] flex items-center justify-center">
            <svg width="15" height="10" viewBox="0 0 15 10">
              <rect width="10" height="10" rx="2" fill="#fff" />
              <path d="M11 3.500l4-3v9l-4-3z" fill="#fff" />
            </svg>
          </div>
        </TaskSlot>
        <TaskSlot>
          <svg width="24" height="26" viewBox="0 0 24 26">
            <path d="M12 0C5 0 0 5 0 13c2-6 7-8 11-7 5 1 6 5 6 7H9c-1 6 4 10 9 9 3-1 5-2 6-4V11C24 4 19 0 12 0z" fill="#1e9fd6" />
            <path d="M24 12c0 6-4 8-7 8-5 0-7-3-8-7h8c0-3-1-6-5-7 7-2 12 1 12 6z" fill="#48d08a" />
            <path d="M0 13c0 8 6 13 13 13-6-2-8-8-6-12 1-3 3-5 5-6C6 6 2 9 0 13z" fill="#1465ac" />
          </svg>
        </TaskSlot>
        <TaskSlot pink>
          <svg width="24" height="30" viewBox="0 0 24 30">
            <ellipse cx="12" cy="15" rx="11.5" ry="14.5" fill="#253d6c" stroke="#4a88c7" strokeWidth="1.5" />
            <ellipse cx="12" cy="15" rx="8" ry="11" fill="#7fa9c9" />
            <ellipse cx="12" cy="16" rx="4.5" ry="8" fill="#d8dfe6" />
          </svg>
        </TaskSlot>
        <TaskSlot pink>
          <svg width="21" height="27" viewBox="0 0 21 27">
            <path d="M5 0h11l3 3 2 4-1 8-4 8-5 4-5-4-4-8-1-8 2-4z" fill="#fb542b" />
            <path d="M6 8l3 1h3l3-1-1 4-2 3v3l-1.500 2L9 18v-3l-2-3z" fill="#fff" />
          </svg>
        </TaskSlot>
        <TaskSlot pink>
          <svg width="26" height="28" viewBox="0 0 26 28">
            <circle cx="17" cy="5" r="4" fill="#7b83eb" />
            <rect x="11" y="9" width="13" height="13" rx="2" fill="#7b83eb" />
            <rect x="0" y="5" width="15" height="15" fill="#4b53bc" />
            <path d="M3 8h9v2H8.500v7h-2v-7H3z" fill="#fff" />
            <circle cx="20" cy="21" r="6" fill="#92c353" stroke="#fff" />
            <path d="M17 21l2 2 4-4" fill="none" stroke="#fff" strokeWidth="1.3" />
          </svg>
        </TaskSlot>
        <TaskSlot active pink>
          <svg width="24" height="30" viewBox="0 0 24 30">
            <rect width="24" height="30" fill="#fbeedc" />
            <path d="M6 4h12v4h-8v5h6v4h-6v9H6z" fill="#e8923c" />
            <rect x="10" y="20" width="8" height="6" fill="#f6c996" />
          </svg>
        </TaskSlot>
      </div>
      <div className="ml-auto flex items-center h-full">
        <div className="w-[24px] flex justify-center">
          <svg width="13" height="7" viewBox="0 0 13 7">
            <path d="M1 6.500l5.500-5.500 5.500 5.500" fill="none" stroke="#ddd" strokeWidth="1" />
          </svg>
        </div>
        <div className="w-[23px] flex justify-center">
          <FaMicrophone className="text-[#eee] text-[16px]" />
        </div>
        <div className="w-[24px] flex justify-center">
          <svg width="17" height="15" viewBox="0 0 17 15">
            <path d="M5 1h11v9H1V5M8 10v4M4 14h8" fill="none" stroke="#eee" />
            <rect x="0.5" y="0.5" width="4" height="4" fill="none" stroke="#eee" />
          </svg>
        </div>
        <div className="w-[24px] flex justify-center">
          <svg width="17" height="13" viewBox="0 0 17 13">
            <path d="M0.500 4.500h2.500L7 1v11L3 8.500H0.500z" fill="none" stroke="#eee" />
            <path d="M9.500 4c1 1.500 1 3.500 0 5" fill="none" stroke="#eee" />
            <path d="M12 2c2 2.500 2 6.500 0 9M14.500 0.500c3 3.500 3 8.500 0 12" fill="none" stroke="#888" />
          </svg>
        </div>
        <div className="w-[34px] flex flex-col items-center text-[12px] leading-[17px]">
          <span>ESP</span>
          <span>ES</span>
        </div>
        <div className="w-[73px] flex flex-col items-center text-[12px] leading-[17px]">
          <span>19:12</span>
          <span>4/04/2021</span>
        </div>
        <div className="w-[39px] flex justify-center">
          <svg width="17" height="16" viewBox="0 0 17 16">
            <path d="M0.500 0.500h16v12h-6l-2 2.500-2-2.500h-6z" fill="none" stroke="#eee" />
          </svg>
        </div>
        <div className="w-[14px] h-full flex">
          <span className="ml-[9px] w-px h-full bg-[#666]" />
        </div>
      </div>
    </div>
  );
}

export default function App() {
  return (
    <div className="w-[1920px] h-[1080px] overflow-hidden flex flex-col bg-white font-['Liberation_Sans',Arial,sans-serif]">
      <div className="h-[23px] bg-white flex items-center shrink-0 font-['Noto_Sans',sans-serif] text-[11.5px] text-black">
        <svg className="ml-[2px]" width="16" height="18" viewBox="0 0 16 18">
          <rect width="16" height="18" fill="#f6dcc4" />
          <path d="M3 2h9v3H6v3h5v3H6v5H3z" fill="#e8782a" />
        </svg>
        <span className="ml-[5px]">Autodesk Fusion 360 (Education License)</span>
        <div className="ml-auto mr-[2px] flex">
          <div className="w-[46px] flex justify-center">
            <svg width="11" height="11" viewBox="0 0 11 11">
              <path d="M0 5.500h11" stroke="#000" />
            </svg>
          </div>
          <div className="w-[46px] flex justify-center">
            <svg width="11" height="11" viewBox="0 0 11 11">
              <path d="M0.500 2.500h8v8h-8zM2.500 2.500v-2h8v8h-2" fill="none" stroke="#000" />
            </svg>
          </div>
          <div className="w-[46px] flex justify-center">
            <svg width="11" height="11" viewBox="0 0 11 11">
              <path d="M0.500 0.500l10 10M10.500 0.500l-10 10" stroke="#000" />
            </svg>
          </div>
        </div>
      </div>
      <div className="flex-1 flex min-h-0">
        <LeftPanel />
        <div className="flex-1 flex flex-col min-w-0">
          <TopBar />
          <Toolbar />
          <div className="relative flex-1 bg-white border-b-2 border-[#cbcbcb] overflow-hidden">
            <Scene />
            <ViewCube />
            <PanelHead label="BROWSER" sign="−" cls="top-[4px]" />
            <BrowserTree />
            <PanelHead label="COMMENTS" sign="+" cls="top-[824px]" />
            <NavBar />
          </div>
          <Timeline />
        </div>
      </div>
      <Taskbar />
    </div>
  );
}
